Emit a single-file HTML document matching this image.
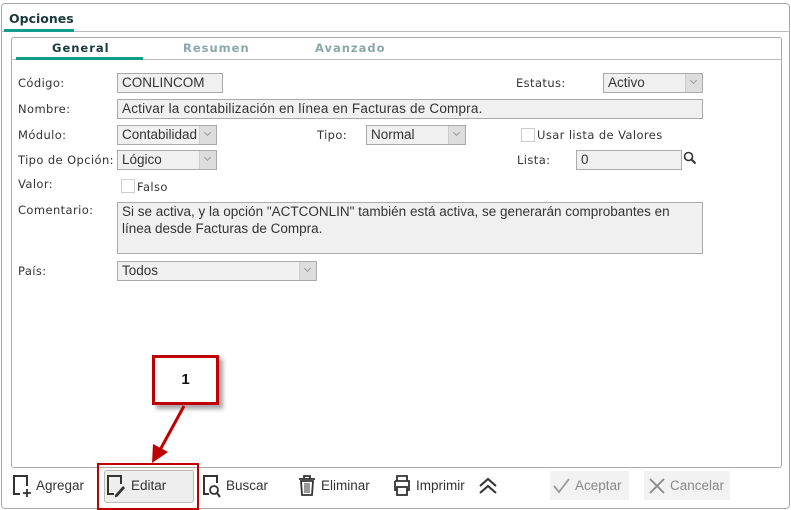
<!DOCTYPE html><html><head><style>
body{margin:0;width:791px;height:510px;background:#fff;font-family:"DejaVu Sans","Liberation Sans",sans-serif;font-size:11.5px;color:#333;position:relative;overflow:hidden}
.a{position:absolute}
.lbl{position:absolute;font-size:11.5px;color:#333;letter-spacing:.4px}
.in{position:absolute;background:#f0f0f0;border:1px solid #aaa;box-sizing:border-box;font-family:"Liberation Sans",sans-serif;font-size:13.5px;color:#333;padding:0 4px;line-height:17px}
.dd{position:absolute;right:0;top:0;bottom:0;width:16px;background:#ddd;border-left:1px solid #ccc}
.dd:after{content:"";position:absolute;left:5px;top:4px;width:4px;height:4px;border-right:1px solid #999;border-bottom:1px solid #999;transform:rotate(45deg)}
.cb{position:absolute;width:12px;height:12px;border:1px solid #ccc;background:#fff}
.tb{position:absolute;top:478px;font-family:"Liberation Sans",sans-serif;font-size:13.5px;color:#333}
</style></head><body>
<div class="a" style="left:1px;top:3px;width:787px;height:504px;border:1px solid #aaa;border-radius:4px"></div>
<div class="a" style="left:9px;top:11px;font-weight:bold;font-size:12.5px;color:#1a3a3a">Opciones</div>
<div class="a" style="left:1px;top:31px;width:789px;height:1px;background:#bbb"></div>
<div class="a" style="left:4px;top:29px;width:70px;height:3px;background:#129c8a"></div>
<div class="a" style="left:11px;top:37px;width:769px;height:429px;border:1px solid #aaa;border-radius:3px"></div>
<div class="a" style="left:11px;top:59px;width:770px;height:1px;background:#bbb"></div>
<div class="a" style="left:16px;top:57px;width:127px;height:3px;background:#129c8a"></div>
<div class="a" style="left:52px;top:41px;font-weight:bold;font-size:11.5px;letter-spacing:1px;color:#1a3a3a">General</div>
<div class="a" style="left:183px;top:41px;font-weight:bold;font-size:11.5px;letter-spacing:1px;color:#8aa8a8">Resumen</div>
<div class="a" style="left:315px;top:41px;font-weight:bold;font-size:11.5px;letter-spacing:1px;color:#8aa8a8">Avanzado</div>

<div class="lbl" style="left:18px;top:76px">Código:</div>
<div class="in" style="left:117px;top:73px;width:106px;height:20px">CONLINCOM</div>
<div class="lbl" style="left:516px;top:76px">Estatus:</div>
<div class="in" style="left:603px;top:73px;width:100px;height:20px">Activo<div class="dd"></div></div>
<div class="lbl" style="left:18px;top:102px">Nombre:</div>
<div class="in" style="left:117px;top:99px;width:586px;height:20px;letter-spacing:.2px">Activar la contabilización en línea en Facturas de Compra.</div>
<div class="lbl" style="left:18px;top:128px">Módulo:</div>
<div class="in" style="left:117px;top:125px;width:100px;height:20px;overflow:hidden;white-space:nowrap">Contabilidad<div class="dd"></div></div>
<div class="lbl" style="left:317px;top:128px">Tipo:</div>
<div class="in" style="left:366px;top:125px;width:100px;height:20px">Normal<div class="dd"></div></div>
<div class="cb" style="left:521px;top:128px"></div>
<div class="lbl" style="left:537px;top:128px">Usar lista de Valores</div>
<div class="lbl" style="left:18px;top:153px">Tipo de Opción:</div>
<div class="in" style="left:117px;top:150px;width:100px;height:20px">Lógico<div class="dd"></div></div>
<div class="lbl" style="left:517px;top:153px">Lista:</div>
<div class="in" style="left:576px;top:150px;width:106px;height:20px">0</div>
<svg class="a" style="left:683px;top:151px" width="14" height="14"><circle cx="5.5" cy="5.5" r="4" fill="none" stroke="#333" stroke-width="1.6"/><line x1="8.5" y1="8.5" x2="12.5" y2="12.5" stroke="#333" stroke-width="2"/></svg>
<div class="lbl" style="left:18px;top:177px">Valor:</div>
<div class="cb" style="left:121px;top:179px"></div>
<div class="lbl" style="left:137px;top:180px">Falso</div>
<div class="lbl" style="left:18px;top:203px">Comentario:</div>
<div class="in" style="left:117px;top:202px;width:586px;height:52px;line-height:17px;padding-top:0">Si se activa, y la opción "ACTCONLIN" también está activa, se generarán comprobantes en línea desde Facturas de Compra.</div>
<div class="lbl" style="left:18px;top:264px">País:</div>
<div class="in" style="left:117px;top:261px;width:200px;height:20px">Todos<div class="dd"></div></div>

<div class="a" style="left:152px;top:355px;width:61px;height:44px;border:3px solid #c00000;background:#fff;box-shadow:4px 4px 4px rgba(0,0,0,.35);text-align:center;line-height:44px;font-family:'Liberation Sans',sans-serif;font-weight:bold;font-size:15px;color:#111">1</div>
<svg class="a" style="left:140px;top:400px" width="60" height="70"><line x1="44" y1="6" x2="20" y2="50" stroke="#c00000" stroke-width="3"/><polygon points="12,63 13,44 28,52" fill="#c00000"/></svg>

<div class="a" style="left:104px;top:470px;width:88px;height:31px;background:#eee;border:1px solid #bbb;border-radius:3px"></div>
<div class="a" style="left:97px;top:463px;width:98px;height:43px;border:2px solid #c00000"></div>
<svg class="a" style="left:12px;top:474px" width="22" height="26"><path d="M8 20H2V2h13v10" fill="none" stroke="#333" stroke-width="2"/><path d="M15 15v8M11 19h8" stroke="#333" stroke-width="1.8"/></svg>
<div class="tb" style="left:36px">Agregar</div>
<svg class="a" style="left:106px;top:474px" width="22" height="26"><path d="M8 20H2V2h13v8" fill="none" stroke="#333" stroke-width="2"/><path d="M9 21l8-9 2 2-8 9h-2z" fill="#333"/></svg>
<div class="tb" style="left:131px">Editar</div>
<svg class="a" style="left:202px;top:474px" width="22" height="26"><path d="M7 20H2V2h13v7" fill="none" stroke="#333" stroke-width="2"/><circle cx="12" cy="16" r="4" fill="none" stroke="#333" stroke-width="1.8"/><path d="M15 19l3 4" stroke="#333" stroke-width="2"/></svg>
<div class="tb" style="left:226px">Buscar</div>
<svg class="a" style="left:298px;top:474px" width="20" height="24"><path d="M1 5h16M6 5V2h6v3M3 7h12l-1 14H4z" fill="none" stroke="#333" stroke-width="1.8"/><path d="M7 9v10M9 9v10M11 9v10" stroke="#333"/></svg>
<div class="tb" style="left:321px">Eliminar</div>
<svg class="a" style="left:392px;top:474px" width="20" height="24"><path d="M5 7V2h10v5M3 7h14v9h-2M5 16H3V7" fill="none" stroke="#333" stroke-width="1.8"/><rect x="5" y="13" width="10" height="8" fill="none" stroke="#333" stroke-width="1.8"/></svg>
<div class="tb" style="left:416px">Imprimir</div>
<svg class="a" style="left:478px;top:476px" width="20" height="20"><path d="M2 10l8-7 8 7M2 17l8-7 8 7" fill="none" stroke="#333" stroke-width="2"/></svg>
<div class="a" style="left:550px;top:471px;width:79px;height:29px;background:#f2f2f2"></div>
<svg class="a" style="left:553px;top:477px" width="18" height="18"><path d="M1 9l5 6L16 2" fill="none" stroke="#999" stroke-width="1.8"/></svg>
<div class="tb" style="left:575px;color:#888">Aceptar</div>
<div class="a" style="left:644px;top:471px;width:86px;height:29px;background:#f2f2f2"></div>
<svg class="a" style="left:648px;top:477px" width="18" height="18"><path d="M2 2l14 14M16 2L2 16" stroke="#888" stroke-width="1.8"/></svg>
<div class="tb" style="left:670px;color:#888">Cancelar</div>
</body></html>
